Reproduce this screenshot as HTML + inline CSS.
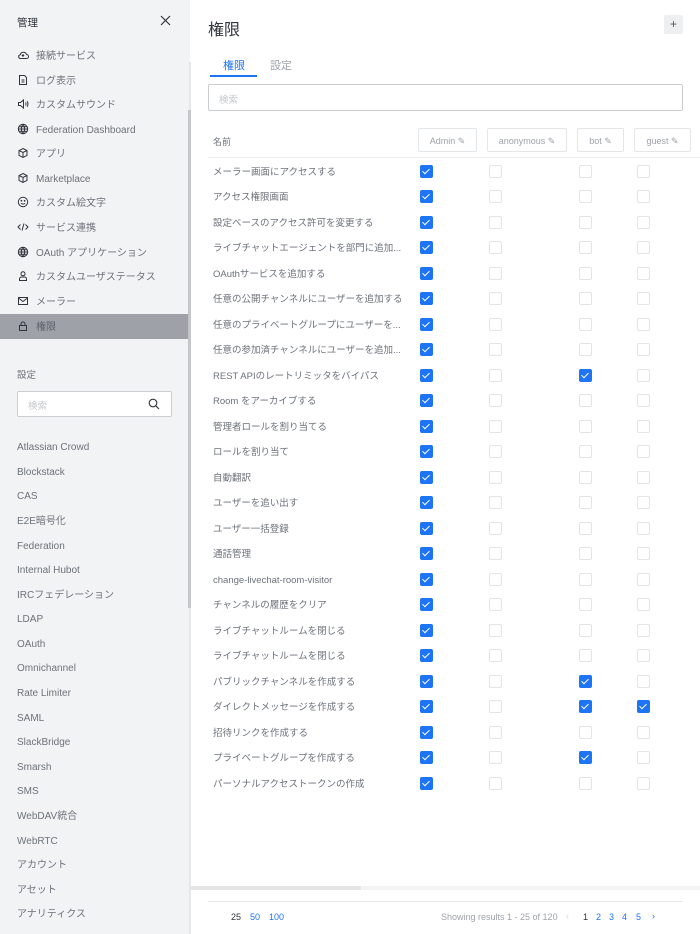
<!DOCTYPE html>
<html><head><meta charset="utf-8"><style>
*{box-sizing:border-box;margin:0;padding:0}
body{width:700px;height:934px;overflow:hidden;background:#fff;font-family:"Liberation Sans","Noto Sans CJK JP",sans-serif;position:relative;color:#2f343d}
.a{position:absolute}
#side{left:0;top:0;width:190px;height:934px;background:#f2f3f5}
.mi{position:absolute;left:17px;font-size:10px;color:#6c727a;height:16px;line-height:16px;white-space:nowrap}
.mi svg{position:absolute;left:0;top:2px}
.mi span{position:absolute;left:19px;top:2px}
.si{position:absolute;left:17px;font-size:10px;color:#6c727a;white-space:nowrap;line-height:14px}
.row{position:absolute;left:213px;font-size:9.5px;color:#6c727a;white-space:nowrap;line-height:14px}
.cb{position:absolute;width:13px;height:13px;border:1.3px solid #e1e5e8;border-radius:2px;background:#fff}
.cb.on{background:#1d74f5;border-color:#1d74f5}
.cb.on:after{content:"";position:absolute;left:3.2px;top:1.2px;width:3px;height:6px;border:solid #fff;border-width:0 1.6px 1.6px 0;transform:rotate(45deg)}
.hb{position:absolute;top:128px;height:24px;border:1px solid #e4e7ea;border-radius:2px;font-size:9px;color:#9ea2a8;line-height:24px;text-align:center}
</style></head><body>
<div class="a" id="side"></div>
<div class="a" style="left:17px;top:15px;font-size:10.5px;color:#2f343d">管理</div>
<svg class="a" style="left:160px;top:15px" width="11" height="11" viewBox="0 0 11 11"><path d="M1 1L10 10M10 1L1 10" stroke="#2f343d" stroke-width="1.2"/></svg>
<div class="a" style="left:0;top:314px;width:189px;height:25px;background:#9ea2a8"></div>
<div class="a" style="left:189px;top:62px;width:2px;height:872px;background:#e6e7e9"></div>
<div class="a" style="left:188px;top:110px;width:3px;height:498px;background:#c4c6c9"></div>

<div class="mi" style="top:47px"><svg width="12" height="12" viewBox="0 0 12 12" fill="none" stroke="#2f343d" stroke-width="1"><path d="M3 9.5H9.5a2 2 0 0 0 0-4 3.2 3.2 0 0 0-6.2 0.3A1.9 1.9 0 0 0 3 9.5zM6 5v3M4.7 6.5H7.3"/></svg><span>接続サービス</span></div>
<div class="mi" style="top:72px"><svg width="12" height="12" viewBox="0 0 12 12" fill="none" stroke="#2f343d" stroke-width="1"><path d="M2.5 1.5h5l2 2v7h-7zM4.5 6h3M4.5 8h3"/></svg><span>ログ表示</span></div>
<div class="mi" style="top:96px"><svg width="12" height="12" viewBox="0 0 12 12" fill="none" stroke="#2f343d" stroke-width="1"><path d="M1.5 4.5h2l3-2.5v8l-3-2.5h-2zM8.5 4.5c.7.8.7 2.2 0 3M10 3.2c1.3 1.5 1.3 4.1 0 5.6"/></svg><span>カスタムサウンド</span></div>
<div class="mi" style="top:121px"><svg width="12" height="12" viewBox="0 0 12 12" fill="none" stroke="#2f343d" stroke-width="1"><circle cx="6" cy="6" r="4.7"/><path d="M1.3 6h9.4M6 1.3c-2.2 2.5-2.2 6.9 0 9.4M6 1.3c2.2 2.5 2.2 6.9 0 9.4M2 3.8h8M2 8.2h8"/></svg><span>Federation Dashboard</span></div>
<div class="mi" style="top:145px"><svg width="12" height="12" viewBox="0 0 12 12" fill="none" stroke="#2f343d" stroke-width="1"><path d="M6 1.5l4 2v5l-4 2-4-2v-5zM2 3.5l4 2 4-2M6 5.5v5"/></svg><span>アプリ</span></div>
<div class="mi" style="top:170px"><svg width="12" height="12" viewBox="0 0 12 12" fill="none" stroke="#2f343d" stroke-width="1"><path d="M6 1.5l4 2v5l-4 2-4-2v-5zM2 3.5l4 2 4-2M6 5.5v5"/></svg><span>Marketplace</span></div>
<div class="mi" style="top:194px"><svg width="12" height="12" viewBox="0 0 12 12" fill="none" stroke="#2f343d" stroke-width="1"><circle cx="6" cy="6" r="4.7"/><path d="M4 7.2c1 1.2 3 1.2 4 0"/><circle cx="4.4" cy="4.8" r=".4"/><circle cx="7.6" cy="4.8" r=".4"/></svg><span>カスタム絵文字</span></div>
<div class="mi" style="top:219px"><svg width="12" height="12" viewBox="0 0 12 12" fill="none" stroke="#2f343d" stroke-width="1"><path d="M3.5 3.5L1 6l2.5 2.5M8.5 3.5L11 6 8.5 8.5M7 2.5L5 9.5"/></svg><span>サービス連携</span></div>
<div class="mi" style="top:244px"><svg width="12" height="12" viewBox="0 0 12 12" fill="none" stroke="#2f343d" stroke-width="1"><circle cx="6" cy="6" r="4.7"/><path d="M1.3 6h9.4M6 1.3c-2.2 2.5-2.2 6.9 0 9.4M6 1.3c2.2 2.5 2.2 6.9 0 9.4M2 3.8h8M2 8.2h8"/></svg><span>OAuth アプリケーション</span></div>
<div class="mi" style="top:268px"><svg width="12" height="12" viewBox="0 0 12 12" fill="none" stroke="#2f343d" stroke-width="1"><circle cx="6" cy="3.8" r="2"/><path d="M2.5 10.5v-1.5c0-1.2 1-2 2-2h3c1 0 2 .8 2 2v1.5z"/></svg><span>カスタムユーザステータス</span></div>
<div class="mi" style="top:293px"><svg width="12" height="12" viewBox="0 0 12 12" fill="none" stroke="#2f343d" stroke-width="1"><path d="M1.5 2.5h9v7h-9zM1.5 3l4.5 3.5L10.5 3"/></svg><span>メーラー</span></div>
<div class="mi" style="top:318px"><svg width="12" height="12" viewBox="0 0 12 12" fill="none" stroke="#2f343d" stroke-width="1"><path d="M2.5 5.5h7v5h-7zM4 5.5V4a2 2 0 0 1 4 0v1.5"/></svg><span style="color:#5b6068">権限</span></div>

<div class="a" style="left:17px;top:367px;font-size:9.5px;color:#6c727a">設定</div>
<div class="a" style="left:17px;top:391px;width:155px;height:26px;border:1px solid #cbced1;background:#fff;border-radius:2px"></div>
<div class="a" style="left:28px;top:398px;font-size:9.5px;color:#c5c8cc">検索</div>
<svg class="a" style="left:148px;top:398px" width="12" height="12" viewBox="0 0 12 12" fill="none" stroke="#2f343d" stroke-width="1.1"><circle cx="5" cy="5" r="3.8"/><path d="M7.8 7.8L11 11"/></svg>

<div class="si" style="top:441px">Atlassian Crowd</div>
<div class="si" style="top:466px">Blockstack</div>
<div class="si" style="top:490px">CAS</div>
<div class="si" style="top:515px">E2E暗号化</div>
<div class="si" style="top:540px">Federation</div>
<div class="si" style="top:564px">Internal Hubot</div>
<div class="si" style="top:589px">IRCフェデレーション</div>
<div class="si" style="top:613px">LDAP</div>
<div class="si" style="top:638px">OAuth</div>
<div class="si" style="top:662px">Omnichannel</div>
<div class="si" style="top:687px">Rate Limiter</div>
<div class="si" style="top:712px">SAML</div>
<div class="si" style="top:736px">SlackBridge</div>
<div class="si" style="top:761px">Smarsh</div>
<div class="si" style="top:785px">SMS</div>
<div class="si" style="top:810px">WebDAV統合</div>
<div class="si" style="top:835px">WebRTC</div>
<div class="si" style="top:859px">アカウント</div>
<div class="si" style="top:884px">アセット</div>
<div class="si" style="top:908px">アナリティクス</div>

<div class="a" style="left:208px;top:16px;font-size:16px;color:#2f343d">権限</div>
<div class="a" style="left:664px;top:15px;width:19px;height:19px;background:#eeeff1;border-radius:2px;font-size:12px;color:#555;text-align:center;line-height:19px">+</div>
<div class="a" style="left:223px;top:57px;font-size:11px;color:#1d74f5">権限</div>
<div class="a" style="left:270px;top:57px;font-size:11px;color:#9ea2a8">設定</div>
<div class="a" style="left:210px;top:75px;width:47px;height:2px;background:#1d74f5"></div>
<div class="a" style="left:208px;top:84px;width:475px;height:27px;border:1.3px solid #cbced1;border-radius:2px"></div>
<div class="a" style="left:219px;top:92px;font-size:9.5px;color:#c5c8cc">検索</div>

<div class="a" style="left:213px;top:135px;font-size:9px;color:#6c727a">名前</div>
<div class="hb" style="left:418px;width:59px">Admin ✎</div>
<div class="hb" style="left:487px;width:80px">anonymous ✎</div>
<div class="hb" style="left:577px;width:47px">bot ✎</div>
<div class="hb" style="left:634px;width:57px">guest ✎</div>
<div class="a" style="left:208px;top:157px;width:492px;height:1px;background:#eceef0"></div>

<div id="rows"></div>
<script>
var names=["メーラー画面にアクセスする","アクセス権限画面","設定ベースのアクセス許可を変更する","ライブチャットエージェントを部門に追加...","OAuthサービスを追加する","任意の公開チャンネルにユーザーを追加する","任意のプライベートグループにユーザーを...","任意の参加済チャンネルにユーザーを追加...","REST APIのレートリミッタをバイパス","Room をアーカイブする","管理者ロールを割り当てる","ロールを割り当て","自動翻訳","ユーザーを追い出す","ユーザー一括登録","通話管理","change-livechat-room-visitor","チャンネルの履歴をクリア","ライブチャットルームを閉じる","ライブチャットルームを閉じる","パブリックチャンネルを作成する","ダイレクトメッセージを作成する","招待リンクを作成する","プライベートグループを作成する","パーソナルアクセストークンの作成"];
var bot=[8,20,21,23],guest=[21],h="";
var xs=[420,489,579,637];
names.forEach(function(n,i){var c=171+25.5*i;
h+='<div class="row" style="top:'+(c-5.5)+'px">'+n+'</div>';
var on=[true,false,bot.indexOf(i)>=0,guest.indexOf(i)>=0];
xs.forEach(function(x,j){h+='<div class="cb'+(on[j]?' on':'')+'" style="left:'+x+'px;top:'+(c-6.5)+'px"></div>'});});
document.getElementById('rows').innerHTML=h;
</script>

<div class="a" style="left:191px;top:886px;width:509px;height:4px;background:#f4f4f5"></div>
<div class="a" style="left:191px;top:886px;width:170px;height:4px;background:#e3e4e6"></div>
<div class="a" style="left:208px;top:901px;width:475px;height:1px;background:#e8eaec"></div>
<div class="a" style="left:231px;top:912px;font-size:9px;color:#2f343d">25</div>
<div class="a" style="left:250px;top:912px;font-size:9px;color:#1d74f5">50</div>
<div class="a" style="left:269px;top:912px;font-size:9px;color:#1d74f5">100</div>
<div class="a" style="left:441px;top:912px;font-size:9px;color:#9ea2a8">Showing results 1 - 25 of 120</div>
<div class="a" style="left:566px;top:911px;font-size:9px;color:#d5d7da">‹</div>
<div class="a" style="left:583px;top:912px;font-size:9px;color:#2f343d">1</div>
<div class="a" style="left:596px;top:912px;font-size:9px;color:#1d74f5">2</div>
<div class="a" style="left:609px;top:912px;font-size:9px;color:#1d74f5">3</div>
<div class="a" style="left:622px;top:912px;font-size:9px;color:#1d74f5">4</div>
<div class="a" style="left:636px;top:912px;font-size:9px;color:#1d74f5">5</div>
<div class="a" style="left:652px;top:911px;font-size:9px;color:#1d74f5">›</div>
</body></html>
